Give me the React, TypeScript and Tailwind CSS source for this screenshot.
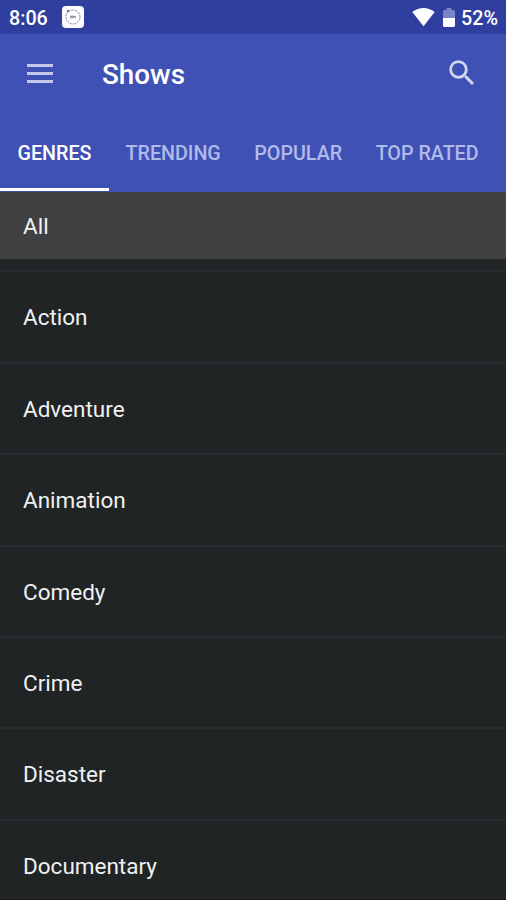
const tabs = ["GENRES", "TRENDING", "POPULAR", "TOP RATED"];

const genres = [
  "Action",
  "Adventure",
  "Animation",
  "Comedy",
  "Crime",
  "Disaster",
  "Documentary",
];

function StatusBar() {
  return (
    <div className="flex h-[34px] shrink-0 items-center bg-[#303f9f] pt-px pr-2 pl-[9px] text-[19.7px] leading-none font-medium text-white">
      <span className="w-[53px] pt-[3px]">8:06</span>
      <svg className="mb-[2px]" width="22" height="22" viewBox="0 0 22 22" fill="none">
        <rect width="22" height="22" rx="4" fill="#fcfcff" />
        <circle cx="11" cy="11" r="7" stroke="#9a9cb4" strokeWidth="1" strokeDasharray="3 0.8" />
        <path d="M5 6l2-2" stroke="#5961a8" strokeWidth="1.6" />
        <path d="M8 10.8h6M9 9.5v3M11 9.5v3M13 10v2" stroke="#85869f" strokeWidth="1" />
      </svg>
      <div className="ml-auto flex items-center">
        <svg width="23" height="19" viewBox="0 0 23 19" fill="#fff">
          <path d="M.3 4.1Q11.5-3.9 22.7 4.1L11.5 18.2Z" />
        </svg>
        <svg className="ml-2" width="12" height="19" viewBox="0 0 12 19">
          <path d="M1 2h2.5V0h5v2H11l1 1v7H0V3z" fill="#7983c5" />
          <path d="M0 10h12v8l-1 1H1l-1-1z" fill="#fff" />
        </svg>
        <span className="ml-[6px] pt-[3px]">52%</span>
      </div>
    </div>
  );
}

export default function App() {
  return (
    <div className="flex h-[900px] w-[506px] flex-col overflow-hidden border-b border-[#151718] bg-[#202425] font-['Roboto',sans-serif]">
      <StatusBar />

      <header className="flex h-[80px] shrink-0 items-center bg-[#3f51b5] pr-[27px] pb-[2px] pl-[27px] text-white">
        <button className="flex w-[26px] flex-col gap-[5px]" aria-label="Menu">
          <span className="h-[3px] w-full bg-[#c2c9ed]" />
          <span className="h-[3px] w-full bg-[#c2c9ed]" />
          <span className="h-[3px] w-full bg-[#c2c9ed]" />
        </button>
        <h1 className="ml-[49px] pt-1 text-[27.8px] leading-none font-medium">Shows</h1>
        <button className="ml-auto" aria-label="Search">
          <svg width="34" height="34" viewBox="0 0 24 24" fill="#d0d5f0">
            <path d="M15.5 14h-.79l-.28-.27A6.471 6.471 0 0 0 16 9.5 6.5 6.5 0 1 0 9.5 16c1.61 0 3.09-.59 4.23-1.57l.27.28v.79l5 4.99L20.49 19l-4.99-5zm-6 0C7.01 14 5 11.99 5 9.5S7.01 5 9.5 5 14 7.01 14 9.5 11.99 14 9.5 14z" />
          </svg>
        </button>
      </header>

      <nav className="flex h-[78px] shrink-0 bg-[#3f51b5] text-[19.7px] font-medium whitespace-nowrap">
        {tabs.map((tab, index) => (
          <button
            key={tab}
            className={
              index === 0
                ? "mb-px w-[109px] border-b-[3px] border-white pt-[5px] pl-[17.5px] text-left text-white"
                : "mr-[17px] ml-[16.5px] pt-px text-[#b2baea]"
            }
          >
            {tab}
          </button>
        ))}
      </nav>

      <main className="text-[22.5px] leading-none text-[#f0f1f1]">
        <div className="flex h-[67px] items-center bg-[#404142] pt-px pl-[23px]">All</div>
        <div className="h-[11.4px]" />
        {genres.map((genre) => (
          <div
            key={genre}
            className="flex h-[91.4px] items-center border-t-2 border-[#272b2d] pt-px pl-[23px]"
          >
            {genre}
          </div>
        ))}
      </main>
    </div>
  );
}
